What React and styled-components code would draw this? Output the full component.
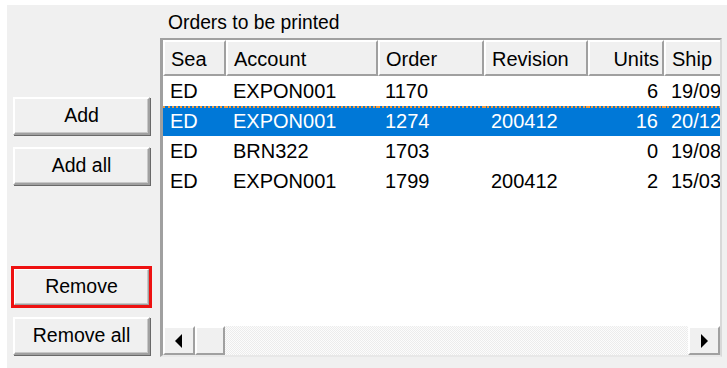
import React from "react";
import styled, { createGlobalStyle } from "styled-components";

const GlobalStyle = createGlobalStyle`
  html, body {
    margin: 0;
    padding: 0;
    background: #ffffff;
  }
  body {
    font-family: "Liberation Sans", Arial, sans-serif;
  }
`;

const Window = styled.div`
  margin: 5px 0 0 7px;
  width: 720px;
  height: 363px;
  background: #f0f0f0;
  display: flex;
  box-sizing: border-box;
  padding-bottom: 11px;
`;

const ButtonColumn = styled.div`
  width: 153px;
  box-sizing: border-box;
  padding: 92px 0 2px 6px;
  display: flex;
  flex-direction: column;
`;

const ButtonGroup = styled.div`
  display: flex;
  flex-direction: column;
  gap: ${(p) => p.gap}px;
  margin-top: ${(p) => (p.bottom ? "auto" : "0")};
`;

const Button = styled.button`
  width: 137px;
  height: 38px;
  box-sizing: border-box;
  background: #f0f0f0;
  border: 0;
  border-top: 2px solid #ffffff;
  border-left: 2px solid #ffffff;
  border-right: 2px solid #a0a0a0;
  border-bottom: 2px solid #a0a0a0;
  box-shadow: 1px 1px 0 #696969, inset -1px -1px 0 #c8c8c8;
  font-family: "Liberation Sans", Arial, sans-serif;
  font-size: 19.5px;
  color: #000;
  padding: 0 0 2px;
  outline: ${(p) => (p.highlight ? "3px solid #ee1111" : "none")};
  outline-offset: ${(p) => (p.highlight ? "-1px" : "0")};
`;

const ListColumn = styled.div`
  flex: 1;
  display: flex;
  flex-direction: column;
  min-width: 0;
  padding-right: 5px;
`;

const Caption = styled.div`
  height: 33px;
  box-sizing: border-box;
  padding: 2px 0 0 8px;
  line-height: 31px;
  font-size: 19.3px;
  color: #000;
`;

const ListBox = styled.div`
  flex: 1;
  display: flex;
  flex-direction: column;
  background: #ffffff;
  border-top: 2px solid #a0a0a0;
  border-left: 3px solid #a0a0a0;
  border-right: 2px solid #d8d8d8;
  border-bottom: 2px solid #e8e8e8;
  overflow: hidden;
  min-height: 0;
`;

const Grid = styled.div`
  display: grid;
  grid-template-columns: 63px 152px 106px 104px 76px 64px;
  white-space: nowrap;
`;

const HeaderCell = styled.div`
  height: 36px;
  box-sizing: border-box;
  background: #f0f0f0;
  border-top: 2px solid #ffffff;
  border-left: 2px solid #ffffff;
  border-right: 2px solid #a0a0a0;
  border-bottom: 2px solid #a0a0a0;
  font-size: 20px;
  line-height: 34px;
  padding: 0 ${(p) => (p.right ? "3px" : "0")} 0 ${(p) => (p.right ? "0" : "6px")};
  text-align: ${(p) => (p.right ? "right" : "left")};
  overflow: hidden;
`;

const Cell = styled.div`
  height: 30px;
  box-sizing: border-box;
  line-height: ${(p) => (p.selected ? "26px" : "31px")};
  font-size: 20px;
  padding: 0 ${(p) => (p.right ? "6px" : "0")} 0 ${(p) => (p.right ? "0" : "7px")};
  text-align: ${(p) => (p.right ? "right" : "left")};
  background: ${(p) => (p.selected ? "#0078d7" : "#ffffff")};
  color: ${(p) => (p.selected ? "#ffffff" : "#000000")};
  border-top: ${(p) => (p.selected ? "2px dotted #f39a3a" : "0")};
  overflow: hidden;
`;

const Spacer = styled.div`
  flex: 1;
`;

const ScrollBar = styled.div`
  height: 29px;
  display: flex;
  background-color: #f7f7f7;
  background-image: repeating-conic-gradient(#ececec 0 25%, #fcfcfc 0 50%);
  background-size: 2px 2px;
`;

const ScrollButton = styled.div`
  width: 32px;
  box-sizing: border-box;
  background: #f0f0f0;
  border-top: 2px solid #ffffff;
  border-left: 2px solid #ffffff;
  border-right: 2px solid #a0a0a0;
  border-bottom: 2px solid #a0a0a0;
  display: flex;
  align-items: center;
  justify-content: center;
`;

const Thumb = styled(ScrollButton)`
  width: 30px;
  margin-right: auto;
`;

const Arrow = ({ dir }) => (
  <svg width="8" height="14" viewBox="0 0 8 14">
    {dir === "left" ? (
      <polygon points="7,0 7,14 0,7" fill="#000" />
    ) : (
      <polygon points="1,0 1,14 8,7" fill="#000" />
    )}
  </svg>
);

const columns = [
  { label: "Sea" },
  { label: "Account" },
  { label: "Order" },
  { label: "Revision" },
  { label: "Units", right: true },
  { label: "Ship" },
];

const orders = [
  ["ED", "EXPON001", "1170", "", "6", "19/09"],
  ["ED", "EXPON001", "1274", "200412", "16", "20/12"],
  ["ED", "BRN322", "1703", "", "0", "19/08"],
  ["ED", "EXPON001", "1799", "200412", "2", "15/03"],
];

const App = () => {
  return (
    <>
      <GlobalStyle />
      <Window>
        <ButtonColumn>
          <ButtonGroup gap={12}>
            <Button>Add</Button>
            <Button>Add all</Button>
          </ButtonGroup>
          <ButtonGroup gap={11} bottom>
            <Button highlight>Remove</Button>
            <Button>Remove all</Button>
          </ButtonGroup>
        </ButtonColumn>
        <ListColumn>
          <Caption>Orders to be printed</Caption>
          <ListBox>
            <Grid>
              {columns.map((c) => (
                <HeaderCell key={c.label} right={c.right}>
                  {c.label}
                </HeaderCell>
              ))}
              {orders.map((row, i) =>
                row.map((v, j) => (
                  <Cell
                    key={`${i}-${j}`}
                    selected={i === 1}
                    right={columns[j].right}
                  >
                    {v}
                  </Cell>
                ))
              )}
            </Grid>
            <Spacer />
            <ScrollBar>
              <ScrollButton>
                <Arrow dir="left" />
              </ScrollButton>
              <Thumb />
              <ScrollButton>
                <Arrow dir="right" />
              </ScrollButton>
            </ScrollBar>
          </ListBox>
        </ListColumn>
      </Window>
    </>
  );
};

export default App;
